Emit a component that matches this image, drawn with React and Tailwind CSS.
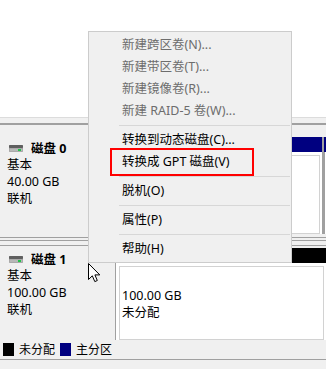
import React from "react";

const DiskIcon = () => (
  <svg width="14" height="7" viewBox="0 0 14 7" className="shrink-0">
    <rect x="0" y="0" width="14" height="7" rx="1" fill="#9a9a9a" />
    <rect x="0" y="0" width="14" height="3" rx="1" fill="#5f5f5f" />
    <rect x="0.5" y="3.5" width="13" height="3" fill="#b8b8b8" />
    <rect x="9" y="4" width="3" height="2" fill="#22c34a" />
  </svg>
);

const DiskLabel = ({ name, size, pt }) => (
  <div className={`w-[113px] shrink-0 bg-[#f0f0f0] pl-[7px] ${pt} text-[12.5px] leading-[17px] text-black`}>
    <div className="h-[16px] flex items-center">
      <div className="ml-[2px]">
        <DiskIcon />
      </div>
      <span className="ml-[8px] font-bold">{name}</span>
    </div>
    <div>基本</div>
    <div>{size}</div>
    <div>联机</div>
  </div>
);

const Partition = ({ color, className = "", children }) => (
  <div className={`flex flex-col ${className}`}>
    <div className={`h-[15px] shrink-0 ${color}`} />
    <div className="flex-1 flex bg-white border-l border-[#a0a0a0] pt-[3px] pl-[3px] pr-[2px]">
      <div className="flex-1 border border-[#d2d2d2] bg-white pl-[2px] pt-[20px] text-[12.5px] leading-[17px] text-black">
        {children}
      </div>
    </div>
  </div>
);

const menuItems = [
  { t: "新建跨区卷(N)...", d: true },
  { t: "新建带区卷(T)...", d: true },
  { t: "新建镜像卷(R)...", d: true },
  { t: "新建 RAID-5 卷(W)...", d: true },
  "sep",
  { t: "转换到动态磁盘(C)..." },
  { t: "转换成 GPT 磁盘(V)" },
  "sep",
  { t: "脱机(O)" },
  "sep",
  { t: "属性(P)" },
  "sep",
  { t: "帮助(H)" },
];

const Cursor = () => (
  <svg width="13" height="20" viewBox="0 0 13 20" className="absolute left-[88px] top-[263px]">
    <path
      d="M0.5 0.5 L0.5 16.5 L4.3 12.8 L6.8 18.6 L9.3 17.5 L6.9 11.9 L11.8 11.9 Z"
      fill="#ffffff"
      stroke="#000000"
      strokeWidth="1"
      strokeLinejoin="miter"
    />
  </svg>
);

export default function App() {
  return (
    <div className="relative w-[326px] h-[369px] overflow-hidden bg-[#f0f0f0] font-['Noto_Sans','Noto_Sans_CJK_SC',sans-serif]">
      <div className="h-[117px] bg-white" />
      <div className="h-[6px] border-t border-[#dcdcdc] bg-[#f0f0f0]" />
      <div className="h-[2px] bg-[#a0a0a0]" />

      {/* Disk 0 row */}
      <div className="flex h-[112px]">
        <DiskLabel name="磁盘 0" size="40.00 GB" pt="pt-[15px]" />
        <div className="flex-1 flex pl-[2px] pt-[12px] pb-[3px]">
          <Partition color="bg-[#000080]" className="w-[207px] shrink-0" />
          <div className="w-[2px] bg-[#a0a0a0]" />
          <Partition color="bg-[#000080]" className="flex-1" />
        </div>
      </div>

      <div className="h-[8px] border-t border-[#a0a0a0] bg-[#f0f0f0]">
        <div className="mt-[2px] h-px bg-[#a0a0a0]" />
      </div>

      {/* Disk 1 row */}
      <div className="flex h-[95px] border-t border-[#a0a0a0]">
        <DiskLabel name="磁盘 1" size="100.00 GB" pt="pt-[5px]" />
        <div className="flex-1 flex pl-[2px] pt-[2px]">
          <Partition color="bg-black" className="flex-1">
            <div>100.00 GB</div>
            <div>未分配</div>
          </Partition>
        </div>
      </div>

      {/* Legend */}
      <div className="h-[19px] flex items-center pl-[3px] text-[12px] text-black">
        <div className="w-[11px] h-[13px] bg-black" />
        <span className="ml-[5px]">未分配</span>
        <div className="ml-[5px] w-[11px] h-[13px] bg-[#000080]" />
        <span className="ml-[5px]">主分区</span>
      </div>
      <div className="border-t border-[#a0a0a0]" />

      {/* Context menu */}
      <div className="absolute left-[88px] top-[31px] w-[204px] h-[232px] bg-[#f0f0f0] border border-[#cccccc] pt-[2px] text-[12.5px]">
        {menuItems.map((it, i) =>
          it === "sep" ? (
            <div key={i} className="h-[7px] flex items-center pl-[30px] pr-[1px]">
              <div className="h-px flex-1 bg-[#d7d7d7]" />
            </div>
          ) : (
            <div
              key={i}
              className={`h-[22px] flex items-center pl-[33px] whitespace-nowrap ${it.d ? "text-[#6d6d6d]" : "text-black"}`}
            >
              {it.t}
            </div>
          )
        )}
        <div className="absolute left-[21px] top-[116px] w-[144px] h-[28px] border-2 border-[#ff0000]" />
      </div>

      <Cursor />
    </div>
  );
}
